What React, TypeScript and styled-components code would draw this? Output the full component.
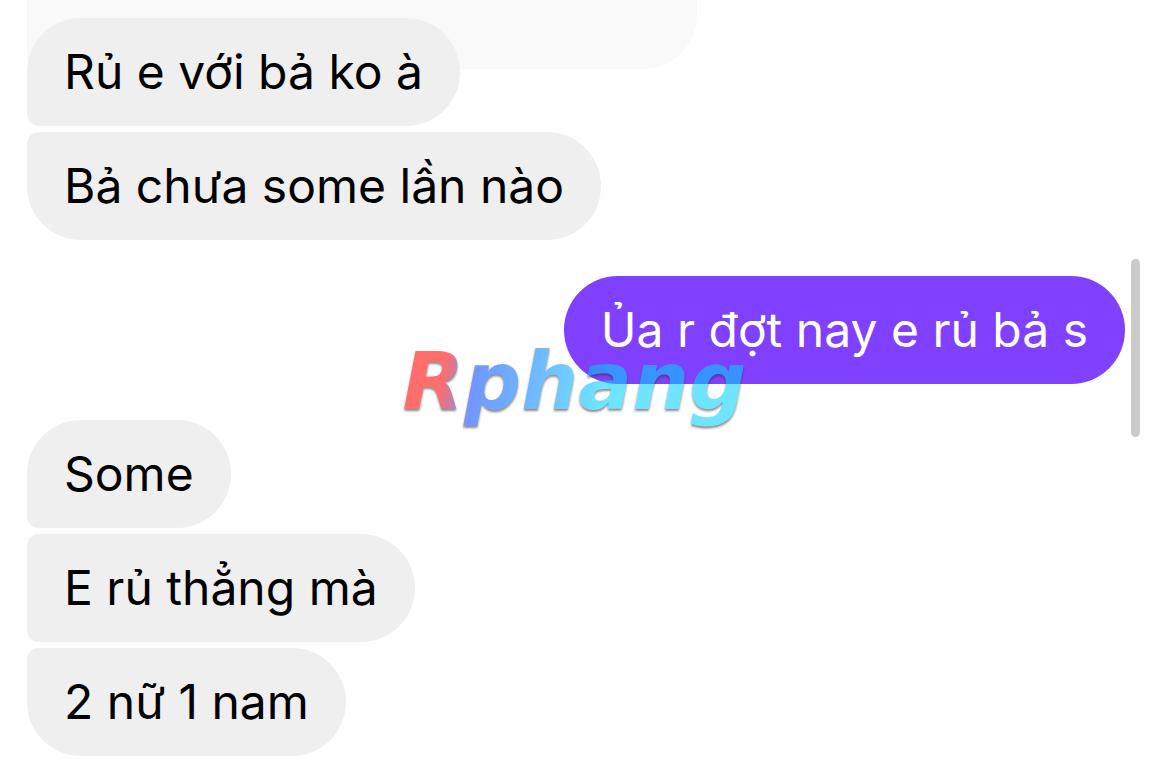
import React from 'react';
import styled, { createGlobalStyle } from 'styled-components';

const GlobalStyle = createGlobalStyle`
  *, *::before, *::after { box-sizing: border-box; }
  body {
    margin: 0;
    background: #ffffff;
    font-family: Inter, Roboto, "Liberation Sans", sans-serif;
  }
`;

type Side = 'in' | 'out';
type Place = 'single' | 'first' | 'middle' | 'last';

const Screen = styled.main`
  position: relative;
  min-height: 100vh;
  overflow: hidden;
`;

const Thread = styled.div`
  display: flex;
  flex-direction: column;
  padding: 0 24px 23px 27px;
`;

const QuotedMessage = styled.div`
  width: 61%;
  height: 69px;
  margin-bottom: -51px;
  background: #f9f9f9;
  border-radius: 0 0 54px 12px;
`;

const Groups = styled.div`
  display: flex;
  flex-direction: column;
  gap: 36px;
`;

const Group = styled.ul<{ $side: Side }>`
  display: flex;
  flex-direction: column;
  align-items: ${({ $side }) => ($side === 'out' ? 'flex-end' : 'flex-start')};
  gap: 6px;
  margin: 0;
  padding: 0;
  list-style: none;
`;

const radii: Record<Place, string> = {
  single: '54px',
  first: '54px 54px 54px 12px',
  middle: '12px 54px 54px 12px',
  last: '12px 54px 54px 54px',
};

const Bubble = styled.li<{ $side: Side; $place: Place }>`
  padding: 24px 37px;
  font-size: 48px;
  line-height: 60px;
  color: ${({ $side }) => ($side === 'out' ? '#ffffff' : '#000000')};
  background: ${({ $side }) => ($side === 'out' ? '#7f40ff' : '#efefef')};
  border-radius: ${({ $place }) => radii[$place]};
`;

const ScrollThumb = styled.div`
  position: absolute;
  top: 259px;
  right: 9px;
  width: 9px;
  height: 178px;
  border-radius: 5px;
  background: #cacaca;
`;

const WatermarkLayer = styled.div`
  position: absolute;
  inset: 0;
  display: grid;
  place-items: center;
  padding-bottom: 16px;
  pointer-events: none;
`;

const Watermark = styled.span`
  padding: 0 8px;
  font-family: "DejaVu Sans", Inter, sans-serif;
  font-size: 80px;
  font-style: italic;
  font-weight: 700;
  line-height: 104px;
  color: transparent;
  background: linear-gradient(100deg, #ff0000 15%, #044bff 24%, #0490ff 42%, #04d1ff 58%);
  background-clip: text;
  -webkit-background-clip: text;
  filter: drop-shadow(0 2px 1px #333333);
  opacity: 0.57;
`;

const groups: { side: Side; messages: string[] }[] = [
  { side: 'in', messages: ['Rủ e với bả ko à', 'Bả chưa some lần nào'] },
  { side: 'out', messages: ['Ủa r đợt nay e rủ bả s'] },
  { side: 'in', messages: ['Some', 'E rủ thẳng mà', '2 nữ 1 nam'] },
];

function placeOf(index: number, count: number): Place {
  if (count === 1) return 'single';
  if (index === 0) return 'first';
  return index === count - 1 ? 'last' : 'middle';
}

export default function App() {
  return (
    <Screen>
      <GlobalStyle />
      <Thread>
        <QuotedMessage />
        <Groups>
          {groups.map(({ side, messages }) => (
            <Group key={messages[0]} $side={side}>
              {messages.map((message, index) => (
                <Bubble key={message} $side={side} $place={placeOf(index, messages.length)}>
                  {message}
                </Bubble>
              ))}
            </Group>
          ))}
        </Groups>
      </Thread>
      <ScrollThumb />
      <WatermarkLayer>
        <Watermark>Rphang</Watermark>
      </WatermarkLayer>
    </Screen>
  );
}
